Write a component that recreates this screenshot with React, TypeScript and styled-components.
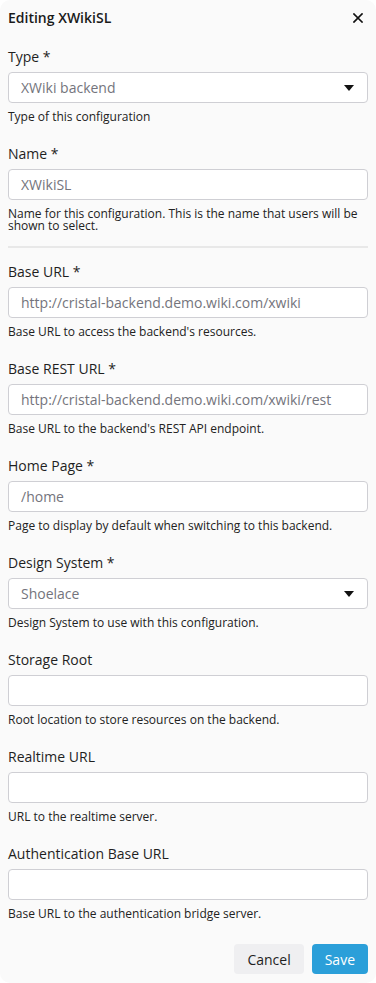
import React from "react";
import styled, { createGlobalStyle } from "styled-components";

const Global = createGlobalStyle`
  html, body { margin: 0; padding: 0; background: #ffffff; }
  body { font-family: "Open Sans", "Noto Sans", sans-serif; color: #1f1f1f; }
  * { box-sizing: border-box; }
`;

const Dialog = styled.div`
  width: 376px;
  min-height: 983px;
  background: #fafafa;
  border-radius: 10px;
  padding: 8px;
  display: flex;
  flex-direction: column;
`;

const Header = styled.div`
  display: flex;
  align-items: center;
  justify-content: space-between;
  height: 20px;
  margin-bottom: 19px;
`;

const Title = styled.h2`
  margin: 0;
  font-size: 14px;
  font-weight: 600;
  line-height: 20px;
  color: #1a1a1a;
`;

const CloseButton = styled.button`
  border: none;
  background: none;
  padding: 0;
  margin-right: 5px;
  width: 10px;
  height: 10px;
  display: flex;
  align-items: center;
  justify-content: center;
  cursor: pointer;
`;

const Body = styled.div`
  display: flex;
  flex-direction: column;
  gap: 14px;
`;

const Section = styled.div`
  display: flex;
  flex-direction: column;
  gap: 21px;
`;

const Divider = styled.hr`
  margin: 0;
  border: none;
  height: 2px;
  background: #e8e8e8;
`;

const Field = styled.div`
  display: flex;
  flex-direction: column;
`;

const Label = styled.label`
  font-size: 14px;
  line-height: 20px;
  color: #1f1f1f;
  margin-bottom: 5px;
`;

const Control = styled.div`
  height: 31px;
  border: 1px solid #cfcfd4;
  border-radius: 4px;
  background: #ffffff;
  display: flex;
  align-items: center;
  padding: 0 12px;
`;

const Value = styled.span`
  font-size: 14px;
  color: #74747c;
  flex: 1;
  white-space: nowrap;
  overflow: hidden;
`;

const Caret = styled.span`
  width: 0;
  height: 0;
  border-left: 5px solid transparent;
  border-right: 5px solid transparent;
  border-top: 6px solid #111;
  margin-right: 1px;
`;

const Help = styled.div`
  margin-top: 8px;
  font-size: 12px;
  line-height: 12px;
  color: #222;
`;

const Footer = styled.div`
  display: flex;
  justify-content: flex-end;
  gap: 8px;
  margin-top: 24px;
`;

const Button = styled.button<{ $primary?: boolean }>`
  height: 30px;
  padding: 0 13px;
  border: none;
  border-radius: 4px;
  font-family: "Open Sans", "Noto Sans", sans-serif;
  font-size: 14px;
  background: ${(p) => (p.$primary ? "#2b9fd9" : "#efeff1")};
  color: ${(p) => (p.$primary ? "#ffffff" : "#1f1f1f")};
  cursor: pointer;
`;

type FieldDef = { label: string; value?: string; help: string; select?: boolean };

const top: FieldDef[] = [
  { label: "Type *", value: "XWiki backend", help: "Type of this configuration", select: true },
  {
    label: "Name *",
    value: "XWikiSL",
    help: "Name for this configuration. This is the name that users will be shown to select.",
  },
];

const rest: FieldDef[] = [
  { label: "Base URL *", value: "http://cristal-backend.demo.wiki.com/xwiki", help: "Base URL to access the backend's resources." },
  { label: "Base REST URL *", value: "http://cristal-backend.demo.wiki.com/xwiki/rest", help: "Base URL to the backend's REST API endpoint." },
  { label: "Home Page *", value: "/home", help: "Page to display by default when switching to this backend." },
  { label: "Design System *", value: "Shoelace", help: "Design System to use with this configuration.", select: true },
  { label: "Storage Root", help: "Root location to store resources on the backend." },
  { label: "Realtime URL", help: "URL to the realtime server." },
  { label: "Authentication Base URL", help: "Base URL to the authentication bridge server." },
];

const FormField = ({ f }: { f: FieldDef }) => (
  <Field>
    <Label>{f.label}</Label>
    <Control>
      <Value>{f.value ?? ""}</Value>
      {f.select && <Caret />}
    </Control>
    <Help>{f.help}</Help>
  </Field>
);

export default function App() {
  return (
    <>
      <Global />
      <Dialog>
        <Header>
          <Title>Editing XWikiSL</Title>
          <CloseButton aria-label="Close">
            <svg width="10" height="10" viewBox="0 0 10 10">
              <path d="M1 1 L9 9 M9 1 L1 9" stroke="#111" strokeWidth="1.7" strokeLinecap="square" />
            </svg>
          </CloseButton>
        </Header>
        <Body>
          <Section>
            {top.map((f) => (
              <FormField key={f.label} f={f} />
            ))}
          </Section>
          <Divider />
          <Section>
            {rest.map((f) => (
              <FormField key={f.label} f={f} />
            ))}
          </Section>
        </Body>
        <Footer>
          <Button>Cancel</Button>
          <Button $primary>Save</Button>
        </Footer>
      </Dialog>
    </>
  );
}
